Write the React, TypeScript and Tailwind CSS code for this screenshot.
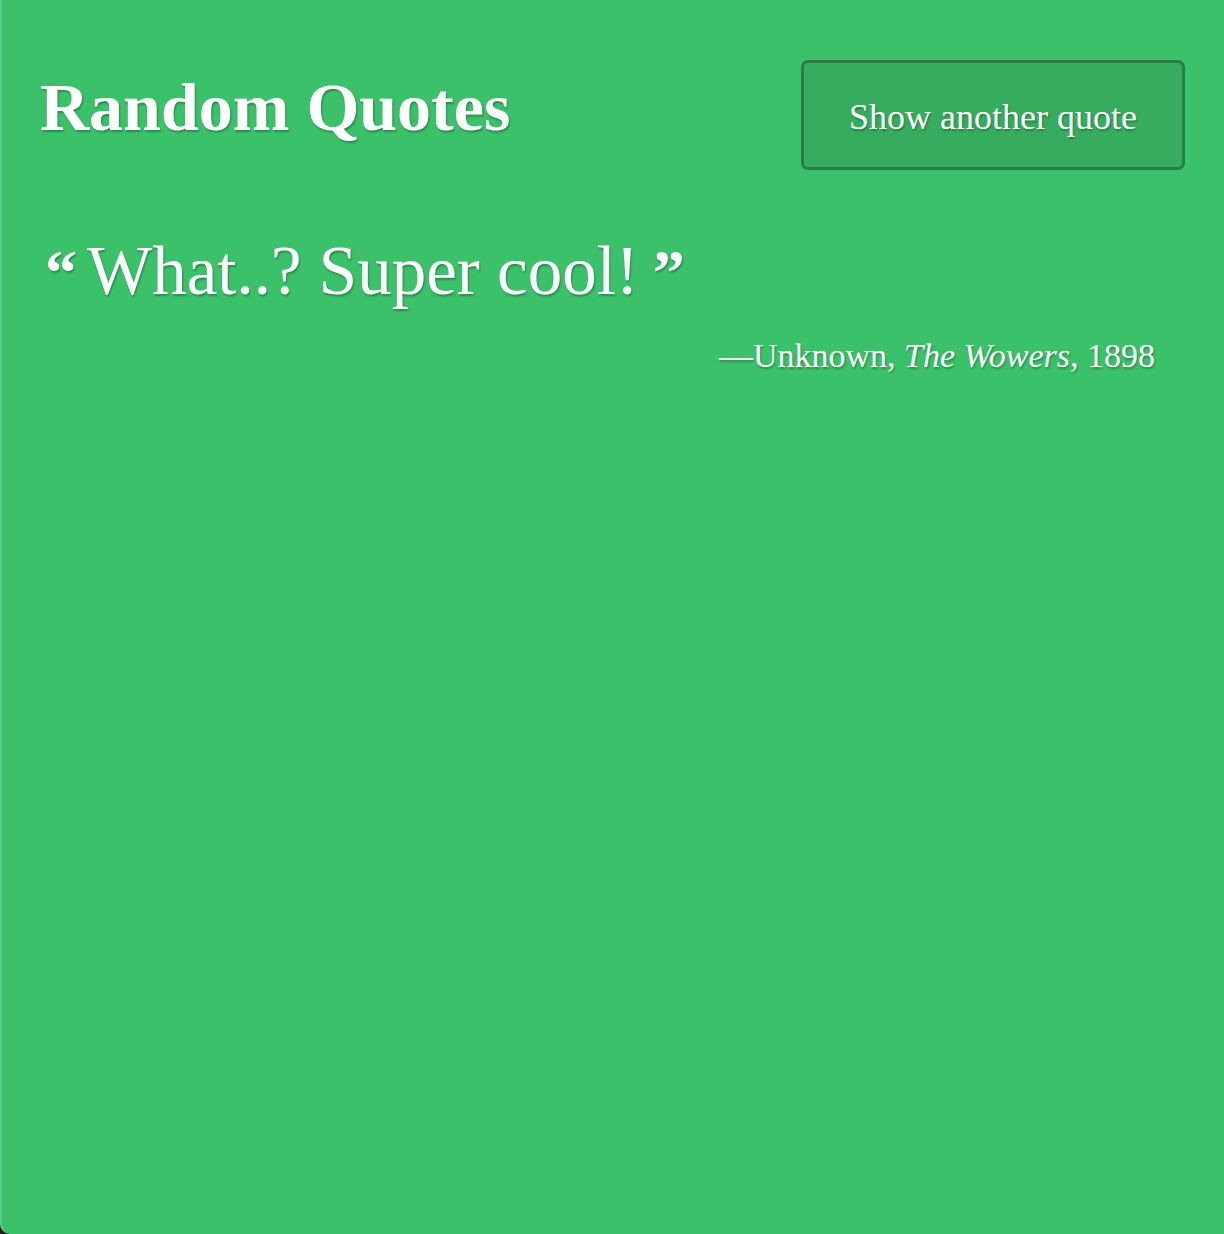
import React from 'react';

const serif = "font-['Liberation_Serif','Times_New_Roman',serif]";
const shadow = '[text-shadow:1px_2px_2px_rgba(0,0,0,0.28)]';

export default function App() {
  return (
    <div className="bg-[#1d1f1d] h-[1234px] w-full">
      <div className={`h-full w-full bg-[#3bc16a] border-l-2 border-[#5fcd86] rounded-bl-[10px] text-white ${serif}`}>
        <header className="flex items-center justify-between pl-[38px] pr-[39px] pt-[60px]">
          <h1 className={`text-[68px] font-bold leading-none mt-[-16px] ${shadow}`}>Random Quotes</h1>
          <button className="w-[384px] h-[110px] rounded-[7px] border-[3px] border-[#2a7d45] bg-[#36ad5e] text-[36px] leading-none">
            <span className={`relative top-[2px] ${shadow}`}>Show another quote</span>
          </button>
        </header>

        <section className="pl-[43px] pr-[69px] mt-[61px]">
          <p className={`text-[69px] leading-[80px] ${shadow}`}>
            <span className="font-bold text-[64px] mr-[10px]">“</span>
            What..? Super cool!
            <span className="font-bold text-[64px] ml-[14px]">”</span>
          </p>
          <p className={`text-right text-[34px] mt-[26px] leading-none ${shadow}`}>
            —Unknown, <i>The Wowers</i>, 1898
          </p>
        </section>
      </div>
    </div>
  );
}
